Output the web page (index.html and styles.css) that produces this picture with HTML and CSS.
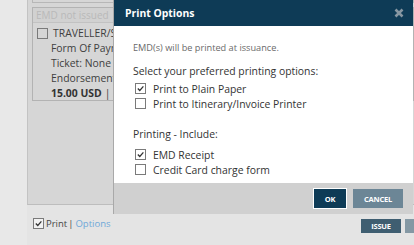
FILE: index.html
```html
<!DOCTYPE html>
<html lang="en">
<head>
    <meta charset="UTF-8">
    <meta name="viewport" content="width=device-width, initial-scale=1.0">
    <title>Print Options</title>
    <link rel="stylesheet" href="styles.css">
</head>
<body>
    <div class="page">
        <div class="gutter"></div>
        <div class="main">
            <div class="panel">
                <div class="top-box"></div>
                <div class="card">
                    <div class="card-head">EMD not issued</div>
                    <div class="card-body">
                        <div class="line"><span class="box"></span>TRAVELLER/SMITH MR</div>
                        <div class="line indent">Form Of Payment: Cash</div>
                        <div class="line indent">Ticket: None</div>
                        <div class="line indent">Endorsement: None</div>
                        <div class="line indent"><strong>15.00 USD</strong> | 2 Coupons</div>
                    </div>
                </div>
            </div>
            <div class="bottom-row">
                <div class="print-link">
                    <span class="box checked">
                        <svg viewBox="0 0 10 10"><path d="M2 5 L4.2 7.2 L8.2 2.6" /></svg>
                    </span>
                    Print <span class="sep">|</span> <a href="#" class="options">Options</a>
                </div>
                <div class="actions">
                    <button class="btn issue">ISSUE</button>
                    <button class="btn more">&nbsp;</button>
                </div>
            </div>
        </div>
    </div>

    <div class="dialog">
        <div class="dialog-head">
            <span class="dialog-title">Print Options</span>
            <svg class="close" viewBox="0 0 10 10"><path d="M1.5 1.5 L8.5 8.5 M8.5 1.5 L1.5 8.5" /></svg>
        </div>
        <div class="dialog-body">
            <p class="note">EMD(s) will be printed at issuance.</p>
            <p class="label">Select your preferred printing options:</p>
            <div class="option">
                <span class="box checked">
                    <svg viewBox="0 0 10 10"><path d="M2 5 L4.2 7.2 L8.2 2.6" /></svg>
                </span>
                Print to Plain Paper
            </div>
            <div class="option"><span class="box"></span>Print to Itinerary/Invoice Printer</div>

            <p class="label group">Printing - Include:</p>
            <div class="option">
                <span class="box checked">
                    <svg viewBox="0 0 10 10"><path d="M2 5 L4.2 7.2 L8.2 2.6" /></svg>
                </span>
                EMD Receipt
            </div>
            <div class="option"><span class="box"></span>Credit Card charge form</div>
        </div>
        <div class="dialog-foot">
            <button class="btn ok">OK</button>
            <button class="btn cancel">CANCEL</button>
        </div>
    </div>
</body>
</html>
```

FILE: styles.css
```css
body {
    margin: 0;
    font-family: "Open Sans", "Noto Sans", sans-serif;
    background: #e4e4e4;
    color: #3c3c3c;
    width: 414px;
    height: 245px;
    overflow: hidden;
    position: relative;
}

.page {
    display: flex;
    height: 245px;
}

.gutter {
    width: 27px;
    background: #e8e8e8;
}

.main {
    flex: 1;
    display: flex;
    flex-direction: column;
}

.panel {
    height: 204px;
    background: #d6d6d6;
    border-left: 1px solid #c3c3c3;
    border-bottom: 1px solid #bdbdbd;
    padding: 0 0 0 4px;
}

.top-box {
    height: 2px;
    border: 1px solid #b7b7b7;
    border-top: none;
    margin-bottom: 4px;
}

.card {
    border: 1px solid #b3b3b3;
    height: 92px;
}

.card-head {
    height: 14px;
    line-height: 14px;
    padding-left: 3px;
    font-size: 10px;
    color: #b9b9b9;
    background: #d1d1d1;
    border-bottom: 1px solid #c2c2c2;
}

/* the dialog covers the rest of the card */
.card-body {
    width: 76px;
    overflow: hidden;
    padding: 3px 0 0 4px;
    font-size: 10.4px;
    color: #404040;
}

.line {
    height: 15px;
    line-height: 15px;
    display: flex;
    align-items: center;
    white-space: nowrap;
}

.line.indent {
    padding-left: 14px;
}

.line strong {
    font-weight: 700;
    color: #333;
    margin-right: 3px;
}

.box {
    width: 9px;
    height: 9px;
    border: 1px solid #7a7a7a;
    margin-right: 5px;
    flex: none;
    display: inline-block;
    position: relative;
    box-sizing: content-box;
}

.box svg {
    position: absolute;
    left: 0;
    top: 0;
    width: 9px;
    height: 9px;
}

.box svg path {
    fill: none;
    stroke: #333;
    stroke-width: 1.4;
}

.bottom-row {
    display: flex;
    justify-content: space-between;
    padding: 11px 0 0 6px;
}

.print-link {
    display: flex;
    align-items: center;
    font-size: 9.5px;
    color: #444;
    height: 14px;
}

.print-link .box {
    margin-right: 2px;
    background: #f2f2f2;
}

.sep {
    margin: 0 1px;
}

.options {
    color: #6fa8d8;
    text-decoration: none;
    margin-left: 1px;
}

.actions {
    display: flex;
    gap: 4px;
    margin-top: 3px;
    margin-right: -11px;
}

.btn {
    border: none;
    font-family: "Open Sans", sans-serif;
    font-weight: 700;
    font-size: 7.5px;
    color: #fff;
    padding: 0;
    letter-spacing: -0.2px;
}

.issue {
    width: 40px;
    height: 14px;
    background: #3f5e71;
}

.more {
    width: 20px;
    height: 14px;
    background: #8498a4;
}

/* modal */
.dialog {
    position: absolute;
    left: 113px;
    top: 0;
    width: 300px;
    background: #fff;
    border-left: 1px solid #a9a9a9;
    box-sizing: border-box;
}

.dialog-head {
    height: 26px;
    background: #0e3b56;
    display: flex;
    align-items: center;
    justify-content: space-between;
    padding: 0 9px 0 11px;
}

.dialog-title {
    color: #fff;
    font-weight: 700;
    font-size: 10.4px;
}

.close {
    width: 10px;
    height: 10px;
}

.close path {
    stroke: #8797a2;
    stroke-width: 2.6;
}

.dialog-body {
    height: 157px;
    padding: 15px 0 0 19px;
    box-sizing: border-box;
}

.note {
    margin: 0 0 9px;
    font-size: 9.2px;
    line-height: 14px;
    color: #6a6a6a;
}

.label {
    margin: 0 0 2px;
    font-size: 10.4px;
    line-height: 15px;
    color: #333;
}

.label.group {
    margin-top: 16px;
    margin-bottom: 5px;
}

.option {
    display: flex;
    align-items: center;
    height: 15px;
    font-size: 10.4px;
    color: #333;
    padding-left: 2px;
}

.option .box {
    margin-right: 7px;
}

.dialog-foot {
    height: 31px;
    background: #d0d0d0;
    display: flex;
    justify-content: flex-end;
    align-items: center;
    gap: 7px;
    padding-right: 10px;
}

.ok {
    width: 32px;
    height: 19px;
    background: #0e3b56;
    outline: 1px solid #fff;
}

.cancel {
    width: 50px;
    height: 19px;
    background: #6c8696;
}
```
